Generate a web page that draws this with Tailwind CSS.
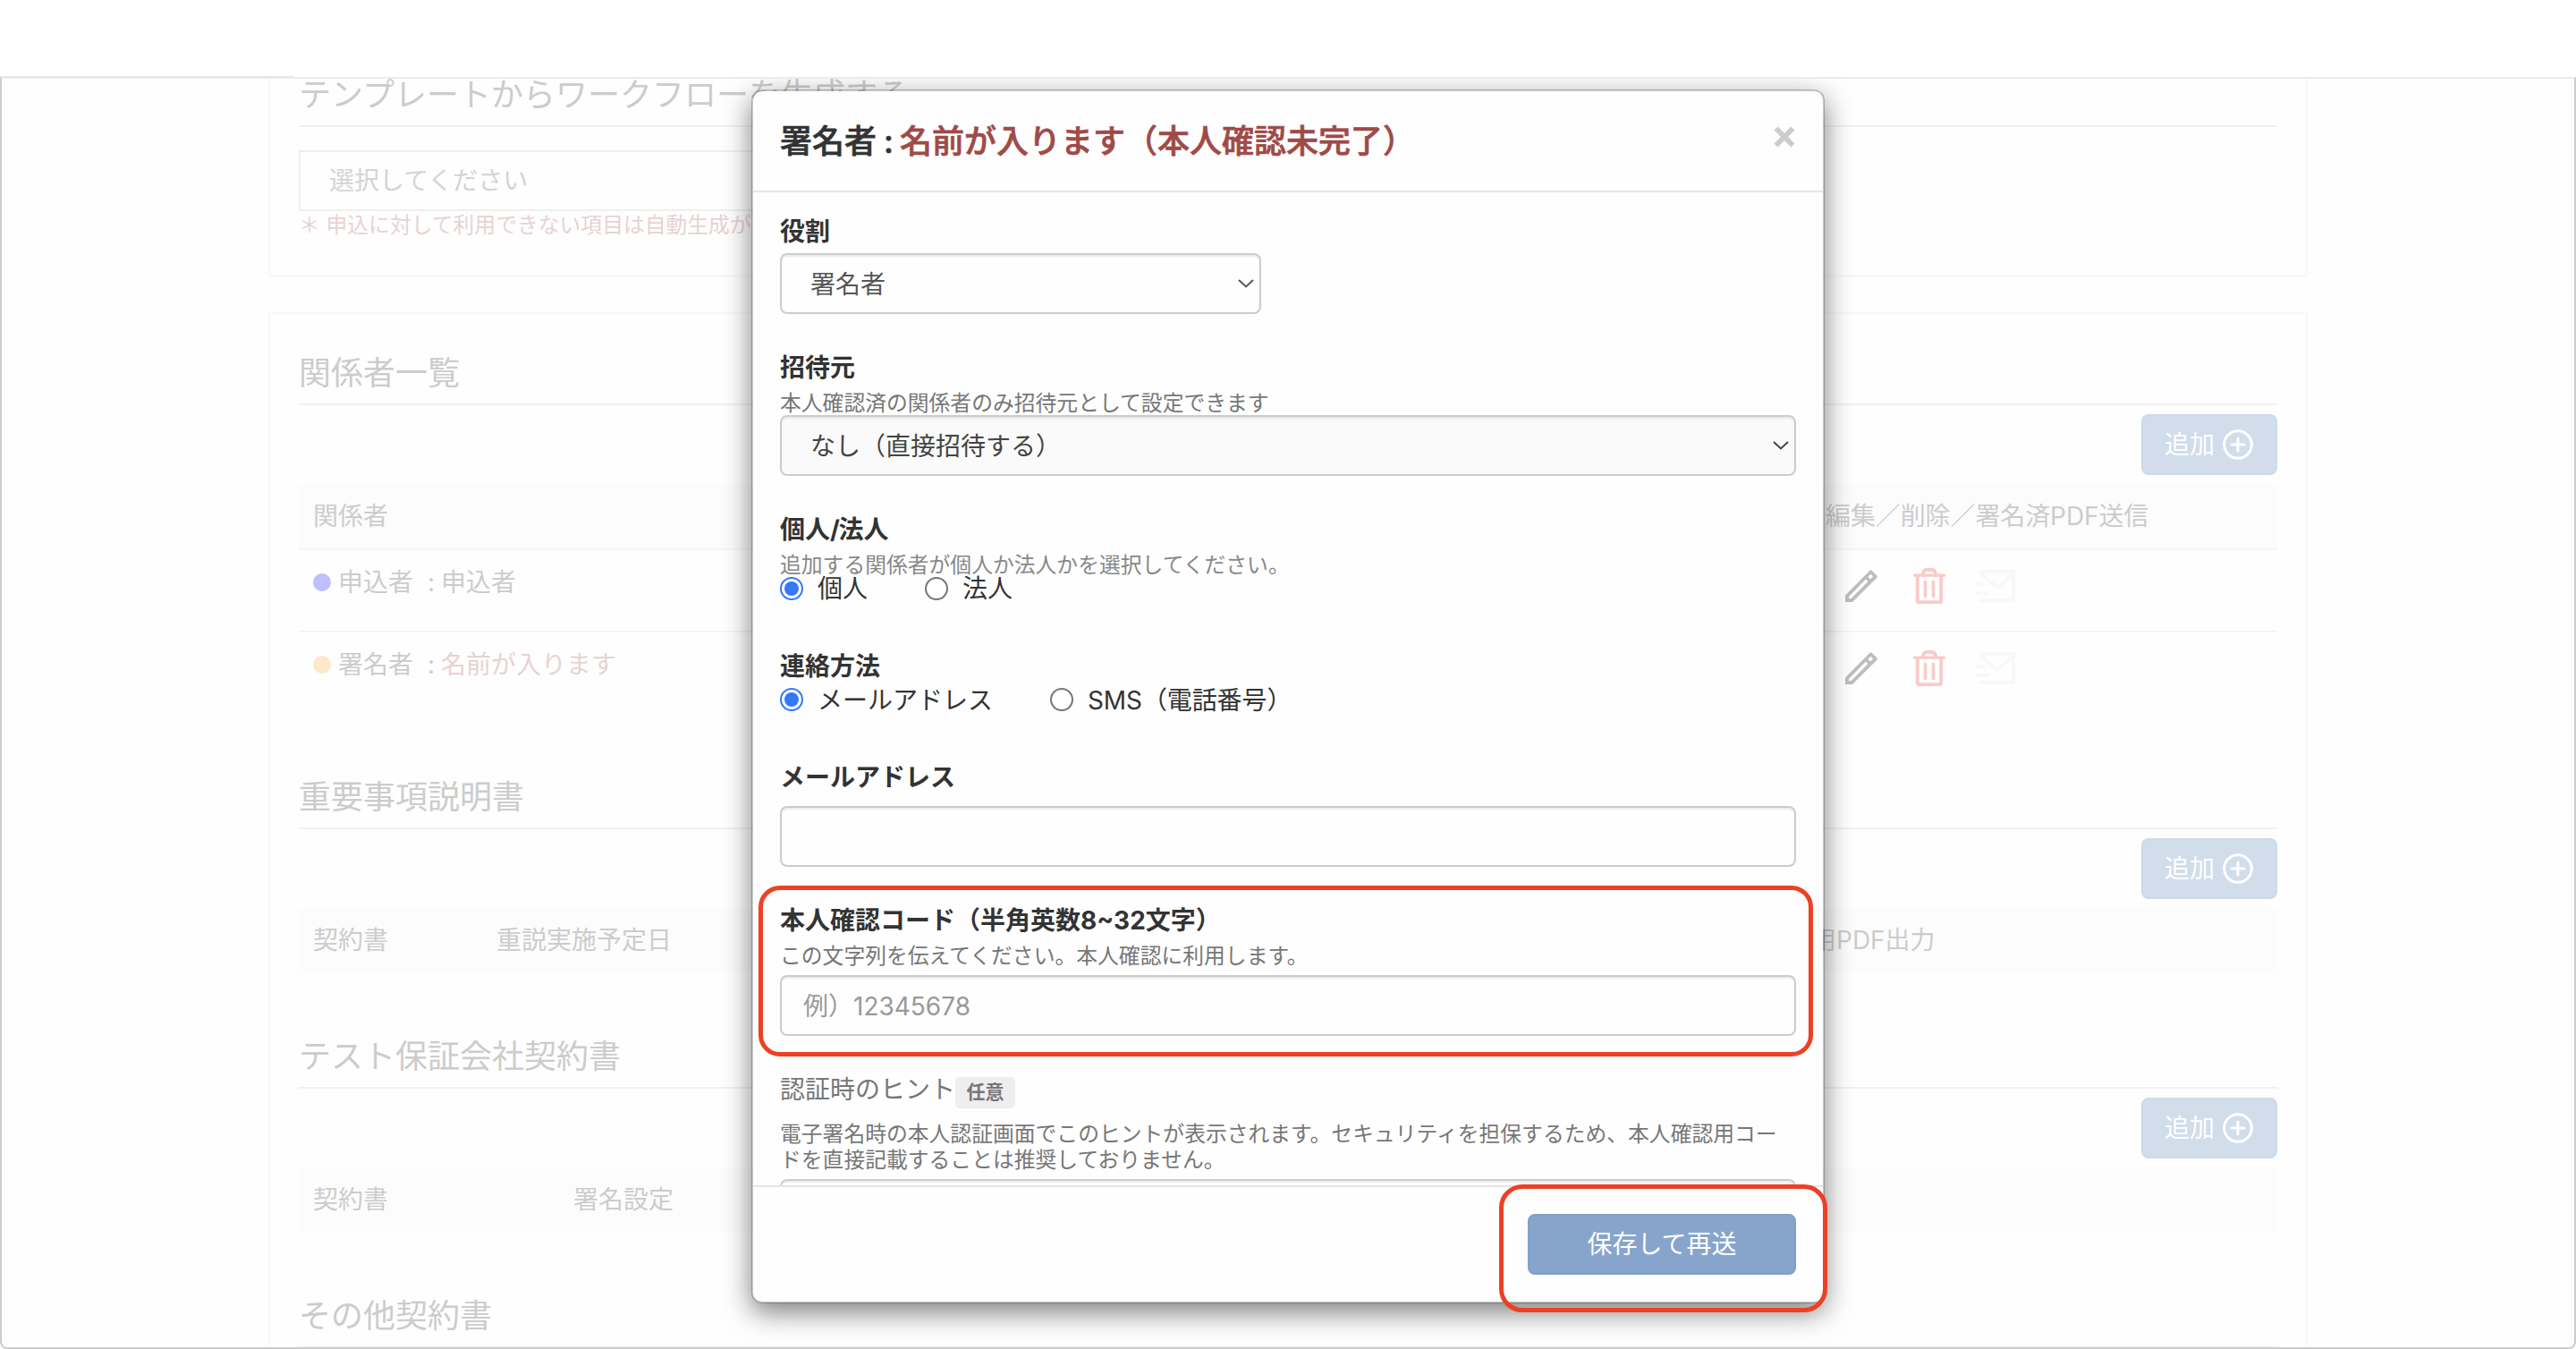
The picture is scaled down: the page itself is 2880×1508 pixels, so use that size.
<!DOCTYPE html>
<html lang="ja">
<head>
<meta charset="utf-8">
<title>署名者</title>
<script src="https://cdn.jsdelivr.net/npm/@tailwindcss/browser@4"></script>
</head>
<body class="w-[2880px] h-[1508px] overflow-hidden bg-white font-['Inter','Noto_Sans_CJK_JP',sans-serif] text-[28px] text-[#333]">
<svg class="hidden">
  <symbol id="pencil" viewBox="0 0 36 36"><path fill-rule="evenodd" d="M0 28.500 27.200.9a2 2 0 0 1 2.800 0L35.200 6.200a2 2 0 0 1 0 2.800L8 36H0zM4 30v2.300h2.500L25.500 13 23 10.500zM28.500 4.800 25.400 7.900 28.100 10.600 31.200 7.500z"/></symbol>
  <symbol id="trash" viewBox="0 0 36 40"><g fill="none" stroke="currentColor" stroke-linejoin="round" stroke-linecap="round"><path d="M1.500 8.200h33" stroke-width="3.200"/><path d="M4.800 8.500v27.800a2 2 0 0 0 2 2h22.400a2 2 0 0 0 2-2V8.500M11 8c0-4 1.500-6 4-6h6c2.500 0 4 2 4 6" stroke-width="4"/><path d="M13.500 15.500v16M22.500 15.500v16" stroke-width="3.600"/></g></symbol>
  <symbol id="mail" viewBox="0 0 44 36"><g fill="none" stroke="currentColor" stroke-width="4"><path d="M6 9V2h36v32H4M6 4l18 16L42 4" stroke-linejoin="round"/><path d="M0 16h10M0 26h16"/></g></symbol>
  <symbol id="plus" viewBox="0 0 34 34"><g fill="none" stroke="currentColor" stroke-width="3"><circle cx="17" cy="17" r="15.300"/><path d="M17 10v14M10 17h14" stroke-linecap="round"/></g></symbol>
  <symbol id="chev" viewBox="0 0 18 10"><path d="M1 1l8 7.500L17 1" fill="none" stroke="currentColor" stroke-width="2"/></symbol>
</svg>
<div class="relative w-[2880px] h-[1508px]">
  <div class="h-[86px] flex items-end"><div class="w-[328px] h-px bg-[#e6e6e6]"></div></div>

  <div class="relative h-[1422px] border-2 border-[#ccc] border-t-[#ebebeb] rounded-b-[8px] overflow-hidden bg-[#fefefe]">
    <main class="ml-[298px] w-[2280px] text-[#ccc]">
      <section class="h-[221px] border-2 border-t-0 border-[#f8f8f8] px-[32px] shadow-[0_2px_2px_rgba(0,0,0,0.01)]">
        <h2 class="h-[54px] border-b-2 border-[#f1f1f1] text-[36px] leading-[36px]">テンプレートからワークフローを生成する</h2>
        <div class="mt-[26px] h-[68px] w-[1090px] border-2 border-[#efefef] pl-[32px] leading-[64px] text-[#d4d4d4]">選択してください</div>
        <p class="h-[30px] leading-[32px] text-[23.8px] text-[#e8d2d1]">＊ 申込に対して利用できない項目は自動生成が</p>
      </section>

      <div class="mt-[40px] h-[1300px] border-2 border-[#f8f8f8] px-[32px]">
        <section class="h-[474px]">
          <h2 class="h-[102px] pt-[46px] border-b-2 border-[#f1f1f1] text-[36px] leading-[40px]">関係者一覧</h2>
          <div class="mt-[10px] flex justify-end">
            <button class="flex items-center gap-[9px] w-[152px] h-[68px] pl-[24px] rounded-[8px] border-2 border-[#cddae8] bg-[#d1ddeb] text-white">追加<svg class="w-[34px] h-[34px]"><use href="#plus"/></svg></button>
          </div>
          <div class="mt-[10px] flex h-[74px] border-b-2 border-[#f5f5f5] bg-[#fcfcfc] pl-[16px] leading-[72px]"><span class="w-[1691px]">関係者</span><span class="tracking-[-0.1px]">編集／削除／署名済PDF送信</span></div>
          <div class="flex h-[92px] border-b-2 border-[#f5f5f5] pl-[16px]">
            <div class="w-[1713px] pt-[16px] leading-[40px] flex"><i class="mt-[10px] mr-[8px] size-[20px] rounded-full bg-[#bfbfff]"></i><span class="w-[100px]">申込者</span><span class="w-[15px]">:</span><span>申込者</span></div>
            <svg class="mt-[22px] mr-[40px] w-[36px] h-[36px] fill-[#bdbdbd]"><use href="#pencil"/></svg>
            <svg class="mt-[20px] mr-[34px] w-[36px] h-[40px] text-[#f9cbc8]"><use href="#trash"/></svg>
            <svg class="mt-[22px] w-[44px] h-[36px] text-[#f8f8f8]"><use href="#mail"/></svg>
          </div>
          <div class="flex h-[90px] pl-[16px]">
            <div class="w-[1713px] pt-[16px] leading-[40px] flex"><i class="mt-[10px] mr-[8px] size-[20px] rounded-full bg-[#fde8cc]"></i><span class="w-[100px]">署名者</span><span class="w-[15px]">:</span><span class="text-[#e8d2d1]">名前が入ります</span></div>
            <svg class="mt-[22px] mr-[40px] w-[36px] h-[36px] fill-[#bdbdbd]"><use href="#pencil"/></svg>
            <svg class="mt-[20px] mr-[34px] w-[36px] h-[40px] text-[#f9cbc8]"><use href="#trash"/></svg>
            <svg class="mt-[22px] w-[44px] h-[36px] text-[#f8f8f8]"><use href="#mail"/></svg>
          </div>
        </section>

        <section class="h-[290px]">
          <h2 class="h-[102px] pt-[46px] border-b-2 border-[#f1f1f1] text-[36px] leading-[40px]">重要事項説明書</h2>
          <div class="mt-[10px] flex justify-end">
            <button class="flex items-center gap-[9px] w-[152px] h-[68px] pl-[24px] rounded-[8px] border-2 border-[#cddae8] bg-[#d1ddeb] text-white">追加<svg class="w-[34px] h-[34px]"><use href="#plus"/></svg></button>
          </div>
          <div class="mt-[10px] flex h-[72px] bg-[#fcfcfc] pl-[16px] leading-[72px]"><span class="w-[205px]">契約書</span><span class="w-[1470px]">重説実施予定日</span><span>用PDF出力</span></div>
        </section>

        <section class="h-[290px]">
          <h2 class="h-[102px] pt-[46px] border-b-2 border-[#f1f1f1] text-[36px] leading-[40px]">テスト保証会社契約書</h2>
          <div class="mt-[10px] flex justify-end">
            <button class="flex items-center gap-[9px] w-[152px] h-[68px] pl-[24px] rounded-[8px] border-2 border-[#cddae8] bg-[#d1ddeb] text-white">追加<svg class="w-[34px] h-[34px]"><use href="#plus"/></svg></button>
          </div>
          <div class="mt-[10px] flex h-[72px] bg-[#fcfcfc] pl-[16px] leading-[72px]"><span class="w-[291px]">契約書</span><span>署名設定</span></div>
        </section>

        <section>
          <h2 class="h-[102px] pt-[46px] border-b-2 border-[#f1f1f1] text-[36px] leading-[40px]">その他契約書</h2>
        </section>
      </div>
    </main>

    <!-- modal dialog -->
    <div class="absolute left-[838px] top-[12px] w-[1200px] h-[1357px] flex flex-col rounded-[12px] border-2 border-black/20 bg-[#fefefe] bg-clip-padding shadow-[0_10px_30px_rgba(0,0,0,0.5)]">
      <header class="h-[113px] shrink-0 flex justify-between border-b-2 border-[#e5e5e5] px-[30px]">
        <h1 class="flex text-[36px] leading-[112px] font-medium whitespace-nowrap [-webkit-text-stroke:0.7px_currentColor]"><span class="w-[116px]">署名者</span><span class="w-[18px]">:</span><span class="text-[#a04a46]">名前が入ります（本人確認未完了）</span></h1>
        <svg class="mt-[39px] mr-[1px] w-[24px] h-[24px] text-[#ccc]" viewBox="0 0 24 24"><path d="M2.500 2.500l19 19M21.500 2.500l-19 19" stroke="currentColor" stroke-width="6"/></svg>
      </header>
      <div class="flex-1 min-h-0 overflow-hidden px-[30px]">
        <label class="block mt-[24px] leading-[40px] font-bold">役割</label>
        <div class="mt-[4px] w-[538px] h-[68px] flex items-center justify-between rounded-[8px] border-2 border-[#ccc] bg-[#fefefe] shadow-[inset_0_2px_2px_rgba(0,0,0,0.075)] pl-[32px] pr-[6px] text-[#555]"><span class="pt-[2px]">署名者</span><svg class="w-[18px] h-[10px]"><use href="#chev"/></svg></div>
        <label class="block mt-[40px] leading-[40px] font-bold">招待元</label>
        <p class="mt-[6px] h-[27px] text-[23.8px] leading-[28px] text-[#777]">本人確認済の関係者のみ招待元として設定できます</p>
        <div class="h-[68px] flex items-center justify-between rounded-[8px] border-2 border-[#ccc] bg-[#fafafa] shadow-[inset_0_2px_2px_rgba(0,0,0,0.075)] pl-[32px] pr-[6px] text-[#444]"><span class="pt-[2px]">なし（直接招待する）</span><svg class="w-[18px] h-[10px]"><use href="#chev"/></svg></div>
        <label class="block mt-[40px] leading-[40px] font-bold">個人<span class="tracking-[-1.500px]">/</span>法人</label>
        <p class="mt-[6px] h-[27px] text-[23.8px] leading-[28px] text-[#888]">追加する関係者が個人か法人かを選択してください。</p>
        <div class="h-[26px] flex items-center leading-[28px]">
          <i class="size-[26px] rounded-full border-2 border-[#3478f6] p-[3px]"><b class="block size-[16px] rounded-full bg-[#3478f6]"></b></i><span class="ml-[16px] w-[120px]">個人</span>
          <i class="size-[26px] rounded-full border-2 border-[#767676] bg-white"></i><span class="ml-[16px]">法人</span>
        </div>
        <label class="block mt-[54px] leading-[40px] font-bold">連絡方法</label>
        <div class="mt-[4px] h-[26px] flex items-center leading-[26px]">
          <i class="size-[26px] rounded-full border-2 border-[#3478f6] p-[3px]"><b class="block size-[16px] rounded-full bg-[#3478f6]"></b></i><span class="ml-[16px] w-[260px] pt-[2px]">メールアドレス</span>
          <i class="size-[26px] rounded-full border-2 border-[#767676] bg-white"></i><span class="ml-[16px] pt-[2px] tracking-[-0.1px]">SMS（電話番号）</span>
        </div>
        <label class="block mt-[54px] leading-[40px] font-bold">メールアドレス</label>
        <div class="mt-[12px] h-[68px] rounded-[8px] border-2 border-[#ccc] bg-[#fefefe] shadow-[inset_0_2px_2px_rgba(0,0,0,0.075)]"></div>
        <label class="block mt-[40px] leading-[40px] font-bold">本人確認コード（半角英数8~32文字）</label>
        <p class="mt-[6px] h-[27px] text-[23.8px] leading-[28px] text-[#777]">この文字列を伝えてください。本人確認に利用します。</p>
        <div class="mt-[8px] h-[68px] rounded-[8px] border-2 border-[#ccc] bg-[#fefefe] shadow-[inset_0_2px_2px_rgba(0,0,0,0.075)] pl-[24px] leading-[66px] text-[#999]">例）12345678</div>
        <div class="mt-[40px] h-[40px] flex leading-[40px] text-[#777]"><span>認証時のヒント</span><span class="mt-[6px] h-[35px] w-[67px] rounded-[5px] bg-[#eee] text-center text-[21px] leading-[33px] font-bold">任意</span></div>
        <p class="mt-[16px] h-[56px] text-[23.8px] leading-[28.56px] text-[#777]">電子署名時の本人認証画面でこのヒントが表示されます。セキュリティを担保するため、本人確認用コードを直接記載することは推奨しておりません。</p>
        <div class="mt-[8px] h-[68px] rounded-[8px] border-2 border-[#ccc] shadow-[inset_0_2px_2px_rgba(0,0,0,0.075)]"></div>
      </div>
      <footer class="h-[130px] shrink-0 flex justify-end border-t-2 border-[#e5e5e5] pt-[30px] pr-[30px]">
        <button class="w-[300px] h-[68px] rounded-[8px] border-2 border-[#809fc5] bg-[#87a5cc] text-white">保存して再送</button>
      </footer>
    </div>
  </div>

  <!-- highlight frames -->
  <div class="absolute left-[848px] top-[990px] w-[1179px] h-[191px] rounded-[24px] border-[5.500px] border-[#ec4125]"></div>
  <div class="absolute left-[1676px] top-[1324px] w-[367px] h-[143px] rounded-[26px] border-[5.500px] border-[#ec4125]"></div>
</div>
</body>
</html>
